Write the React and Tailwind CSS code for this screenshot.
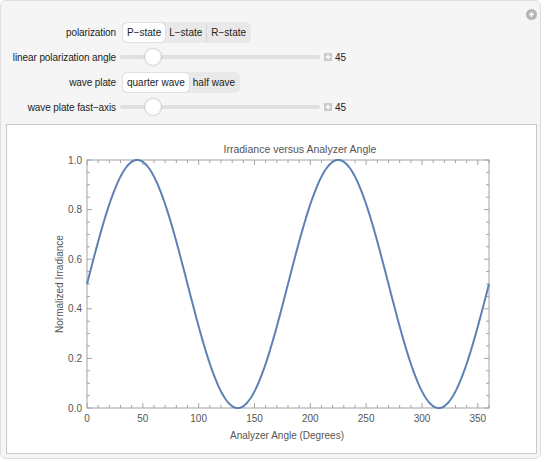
import React from 'react';

const font = { fontFamily: '"Liberation Sans", Arial, sans-serif' };

// plot geometry in page coordinates
const X0 = 87;
const X1 = 489;
const Y0 = 409;
const Y1 = 161;
const px = (t) => X0 + (t * (X1 - X0)) / 360;
const py = (v) => Y0 - v * (Y0 - Y1);

const curve = (() => {
  const pts = [];
  for (let t = 0; t <= 360; t += 1) {
    const v = 0.5 + 0.5 * Math.sin((2 * t * Math.PI) / 180);
    pts.push(`${px(t).toFixed(2)},${py(v).toFixed(2)}`);
  }
  return 'M' + pts.join(' L');
})();

const Segmented = ({ options, selected }) => (
  <div className="flex h-[21px] items-stretch rounded-[5px] bg-[#e9e9e9] p-[1px]">
    {options.map((opt, i) => (
      <div
        key={opt}
        className={
          i === selected
            ? 'flex items-center rounded-[4px] bg-white px-[4px] text-[10px] text-[#222] shadow-[0_0_1px_rgba(0,0,0,0.35)]'
            : 'flex items-center px-[4px] text-[10px] text-[#222]' +
              (i > 0 && i - 1 !== selected ? ' border-l border-[#d6d6d6]' : '')
        }
      >
        {opt}
      </div>
    ))}
  </div>
);

const Slider = ({ value }) => (
  <div className="flex items-center">
    <div className="relative -ml-[2px] h-[20px] w-[200px]">
      <div className="absolute left-0 right-0 top-[8px] h-[4px] rounded-full bg-[#e0e0e0]" />
      <div className="absolute left-[25px] top-[2px] h-[16px] w-[16px] rounded-full bg-white shadow-[0_0_2px_rgba(0,0,0,0.4)]" />
    </div>
    <div className="ml-[4px] flex h-[8px] w-[8px] items-center justify-center rounded-[1px] bg-[#c9c9c9]">
      <svg width="6" height="6" viewBox="0 0 6 6">
        <path d="M3 0.5V5.5M0.5 3H5.5" stroke="#fff" strokeWidth="1.4" />
      </svg>
    </div>
    <span className="ml-[3px] text-[10px] text-[#222]">{value}</span>
  </div>
);

const Row = ({ label, children, className }) => (
  <div className={'flex items-center ' + className}>
    <div className="w-[115px] text-right text-[10px] tracking-[-0.1px] text-[#222]">{label}</div>
    <div className="ml-[6px]">{children}</div>
  </div>
);

const Plot = () => {
  const xTicks = [];
  for (let t = 0; t <= 360; t += 10) {
    const major = t % 50 === 0;
    const len = major ? 5 : 3;
    const x = px(t);
    xTicks.push(<line key={'b' + t} x1={x} x2={x} y1={Y0} y2={Y0 - len} />);
    xTicks.push(<line key={'t' + t} x1={x} x2={x} y1={Y1} y2={Y1 + len} />);
  }
  const yTicks = [];
  for (let k = 0; k <= 20; k++) {
    const v = k * 0.05;
    const major = k % 4 === 0;
    const len = major ? 5 : 3;
    const y = py(v);
    yTicks.push(<line key={'l' + k} x1={X0} x2={X0 + len} y1={y} y2={y} />);
    yTicks.push(<line key={'r' + k} x1={X1} x2={X1 - len} y1={y} y2={y} />);
  }

  return (
    <svg width="529" height="328" viewBox="7 126 529 328" style={font}>
      <rect x={X0} y={Y1} width={X1 - X0} height={Y0 - Y1} fill="none" stroke="#a3a3a3" strokeWidth="1" />
      <g stroke="#a3a3a3" strokeWidth="1">
        {xTicks}
        {yTicks}
      </g>
      <g fill="#555" fontSize="10" textAnchor="middle">
        {[0, 50, 100, 150, 200, 250, 300, 350].map((t) => (
          <text key={t} x={px(t)} y={423}>
            {t}
          </text>
        ))}
      </g>
      <g fill="#555" fontSize="10" textAnchor="end">
        {['0.0', '0.2', '0.4', '0.6', '0.8', '1.0'].map((s, i) => (
          <text key={s} x={82} y={py(i * 0.2) + 3.5}>
            {s}
          </text>
        ))}
      </g>
      <path d={curve} fill="none" stroke="#5e81b5" strokeWidth="2" />
      <text x={300} y={154} fill="#555" fontSize="10.5" textAnchor="middle">
        Irradiance versus Analyzer Angle
      </text>
      <text x={287} y={440} fill="#555" fontSize="10" textAnchor="middle">
        Analyzer Angle (Degrees)
      </text>
      <text
        x={63}
        y={285}
        fill="#555"
        fontSize="10"
        textAnchor="middle"
        transform="rotate(-90 63 285)"
      >
        Normalized Irradiance
      </text>
    </svg>
  );
};

export default function App() {
  return (
    <div className="h-[462px] w-[544px] bg-white" style={font}>
      <div className="relative flex h-[459px] w-[541px] flex-col rounded-[6px] border border-[#dedede] bg-[#f5f5f5]">
        {/* expand button */}
        <div className="absolute right-[3px] top-[8px] flex h-[11px] w-[11px] items-center justify-center rounded-full bg-[#b5b5b5]">
          <svg width="7" height="7" viewBox="0 0 7 7">
            <path d="M3.5 1V6M1 3.5H6" stroke="#fff" strokeWidth="1.5" />
          </svg>
        </div>

        <Row label="polarization" className="mt-[21px] h-[21px]">
          <Segmented options={['P−state', 'L−state', 'R−state']} selected={0} />
        </Row>
        <Row label="linear polarization angle" className="mt-[4px] h-[20px]">
          <Slider value={45} />
        </Row>
        <Row label="wave plate" className="mt-[5px] h-[21px]">
          <Segmented options={['quarter wave', 'half wave']} selected={0} />
        </Row>
        <Row label="wave plate fast−axis" className="mt-[4px] h-[20px]">
          <Slider value={45} />
        </Row>

        <div className="ml-[5px] mt-[7px] h-[330px] w-[531px] border border-[#c9c9c9] bg-white">
          <Plot />
        </div>
      </div>
    </div>
  );
}
